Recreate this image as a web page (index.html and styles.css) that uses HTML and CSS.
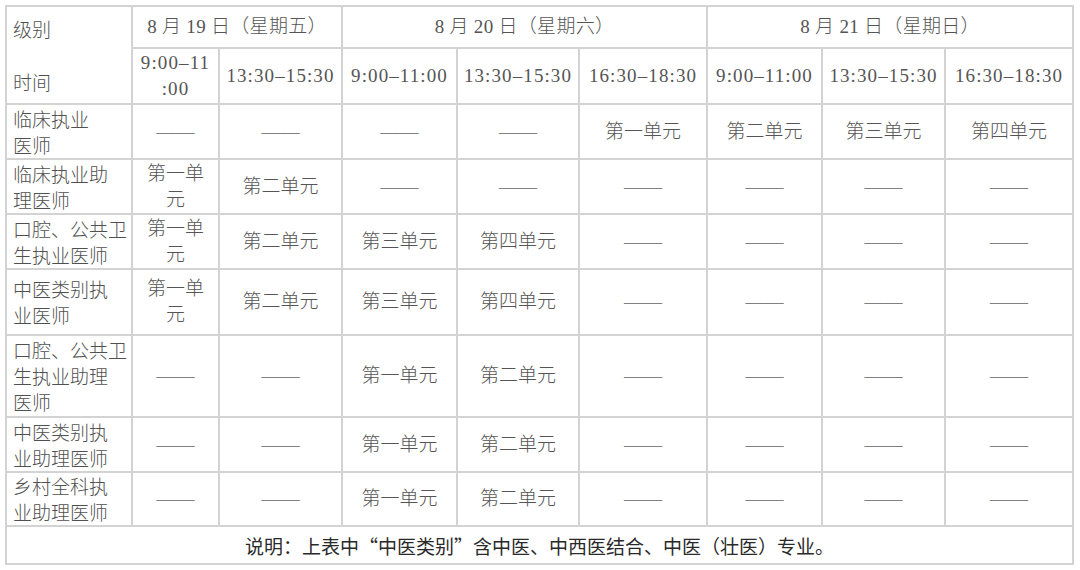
FILE: index.html
```html
<!DOCTYPE html>
<html lang="zh-CN">
<head>
<meta charset="utf-8">
<title>考试时间安排</title>
<link rel="stylesheet" href="styles.css">
</head>
<body>
<table class="sched">
  <colgroup>
    <col class="c-label">
    <col class="c-a">
    <col class="c-b">
    <col class="c-c">
    <col class="c-d">
    <col class="c-e">
    <col class="c-f">
    <col class="c-g">
    <col class="c-h">
  </colgroup>
  <tr class="r-date">
    <td class="label head-label" rowspan="2">
      <div class="head-stack"><span>级别</span><span>时间</span></div>
    </td>
    <td colspan="2" class="date">8 月 19 日（星期五）</td>
    <td colspan="3" class="date">8 月 20 日（星期六）</td>
    <td colspan="3" class="date">8 月 21 日（星期日）</td>
  </tr>
  <tr class="r-time">
    <td class="time">9:00–11<br>:00</td>
    <td class="time">13:30–15:30</td>
    <td class="time">9:00–11:00</td>
    <td class="time">13:30–15:30</td>
    <td class="time">16:30–18:30</td>
    <td class="time">9:00–11:00</td>
    <td class="time">13:30–15:30</td>
    <td class="time">16:30–18:30</td>
  </tr>
  <tr class="r-55a">
    <td class="label">临床执业<br>医师</td>
    <td class="dash">——</td>
    <td class="dash">——</td>
    <td class="dash">——</td>
    <td class="dash">——</td>
    <td>第一单元</td>
    <td>第二单元</td>
    <td>第三单元</td>
    <td>第四单元</td>
  </tr>
  <tr class="r-55">
    <td class="label">临床执业助<br>理医师</td>
    <td>第一单<br>元</td>
    <td>第二单元</td>
    <td class="dash">——</td>
    <td class="dash">——</td>
    <td class="dash">——</td>
    <td class="dash">——</td>
    <td class="dash">——</td>
    <td class="dash">——</td>
  </tr>
  <tr class="r-55">
    <td class="label">口腔、公共卫<br>生执业医师</td>
    <td>第一单<br>元</td>
    <td>第二单元</td>
    <td>第三单元</td>
    <td>第四单元</td>
    <td class="dash">——</td>
    <td class="dash">——</td>
    <td class="dash">——</td>
    <td class="dash">——</td>
  </tr>
  <tr class="r-66">
    <td class="label">中医类别执<br>业医师</td>
    <td>第一单<br>元</td>
    <td>第二单元</td>
    <td>第三单元</td>
    <td>第四单元</td>
    <td class="dash">——</td>
    <td class="dash">——</td>
    <td class="dash">——</td>
    <td class="dash">——</td>
  </tr>
  <tr class="r-82">
    <td class="label">口腔、公共卫<br>生执业助理<br>医师</td>
    <td class="dash">——</td>
    <td class="dash">——</td>
    <td>第一单元</td>
    <td>第二单元</td>
    <td class="dash">——</td>
    <td class="dash">——</td>
    <td class="dash">——</td>
    <td class="dash">——</td>
  </tr>
  <tr class="r-55">
    <td class="label">中医类别执<br>业助理医师</td>
    <td class="dash">——</td>
    <td class="dash">——</td>
    <td>第一单元</td>
    <td>第二单元</td>
    <td class="dash">——</td>
    <td class="dash">——</td>
    <td class="dash">——</td>
    <td class="dash">——</td>
  </tr>
  <tr class="r-54">
    <td class="label">乡村全科执<br>业助理医师</td>
    <td class="dash">——</td>
    <td class="dash">——</td>
    <td>第一单元</td>
    <td>第二单元</td>
    <td class="dash">——</td>
    <td class="dash">——</td>
    <td class="dash">——</td>
    <td class="dash">——</td>
  </tr>
  <tr class="r-note">
    <td colspan="9" class="note">说明：上表中“中医类别”含中医、中西医结合、中医（壮医）专业。</td>
  </tr>
</table>
</body>
</html>
```

FILE: styles.css
```css
html, body {
  margin: 0;
  padding: 0;
  background: #ffffff;
}

body {
  padding: 5px 0 0 5px;
}

.sched {
  border-collapse: collapse;
  table-layout: fixed;
  width: 1069px;
  font-family: "Liberation Serif", "Noto Sans CJK SC", serif;
  font-size: 19px;
  font-weight: 300;
  color: #555555;
}

.c-label { width: 126px; }
.c-a { width: 87px; }
.c-b { width: 123px; }
.c-c { width: 115px; }
.c-d { width: 122px; }
.c-e { width: 128px; }
.c-f { width: 115px; }
.c-g { width: 123px; }
.c-h { width: 128px; }

.sched td {
  border: 2px solid #d3d3d3;
  padding: 0;
  text-align: center;
  vertical-align: middle;
  line-height: 26px;
  white-space: nowrap;
}

.r-date { height: 41px; }
.r-time { height: 55px; }
.r-55a { height: 55px; }
.r-55 { height: 55px; }
.r-66 { height: 66px; }
.r-82 { height: 82px; }
.r-54 { height: 54px; }
.r-note { height: 38px; }

.sched td.label {
  text-align: left;
  padding-left: 6px;
  font-family: "Noto Sans CJK SC", sans-serif;
  color: #505050;
}

.sched td.head-label {
  vertical-align: top;
  padding-top: 9px;
  padding-bottom: 8px;
}

.head-stack {
  display: flex;
  flex-direction: column;
  justify-content: space-between;
  height: 79px;
}

.date {
  letter-spacing: 0.3px;
}

.time {
  letter-spacing: 1.1px;
}

.dash {
  color: #808080;
}

.sched td.note {
  font-family: "Noto Sans CJK SC", sans-serif;
  font-weight: 400;
  color: #2a2a2a;
  font-size: 19px;
  padding-top: 2px;
}
```
